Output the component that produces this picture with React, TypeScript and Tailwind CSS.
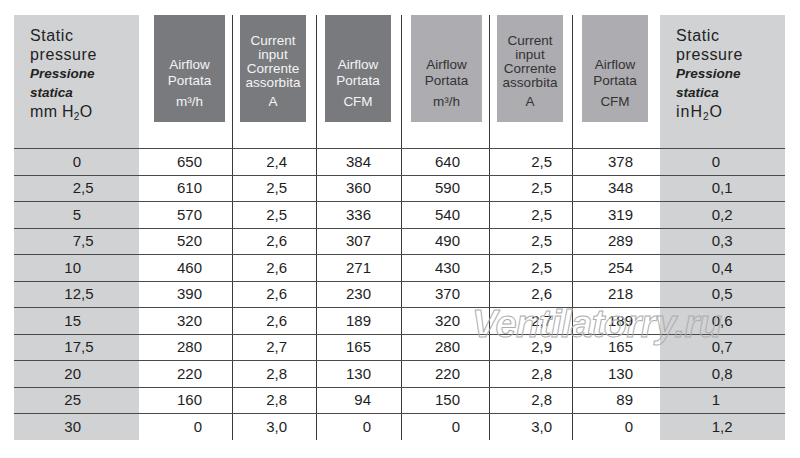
import type { ReactNode } from 'react';

type Col = {
  cell: string;
  box: string;
  pr: string;
  dark: boolean;
  lines: string[];
  unit: ReactNode;
};

const ROWS: string[][] = [
  ['0', '650', '2,4', '384', '640', '2,5', '378', '0'],
  ['2,5', '610', '2,5', '360', '590', '2,5', '348', '0,1'],
  ['5', '570', '2,5', '336', '540', '2,5', '319', '0,2'],
  ['7,5', '520', '2,6', '307', '490', '2,5', '289', '0,3'],
  ['10', '460', '2,6', '271', '430', '2,5', '254', '0,4'],
  ['12,5', '390', '2,6', '230', '370', '2,6', '218', '0,5'],
  ['15', '320', '2,6', '189', '320', '2,7', '189', '0,6'],
  ['17,5', '280', '2,7', '165', '280', '2,9', '165', '0,7'],
  ['20', '220', '2,8', '130', '220', '2,8', '130', '0,8'],
  ['25', '160', '2,8', '94', '150', '2,8', '89', '1'],
  ['30', '0', '3,0', '0', '0', '3,0', '0', '1,2'],
];

const airflow = ['Airflow', 'Portata'];
const current = ['Current', 'input', 'Corrente', 'assorbita'];

const COLS: Col[] = [
  { cell: '', box: 'ml-[15px] w-[71px]', pr: 'pr-[30px]', dark: true, lines: airflow, unit: 'm³/h' },
  { cell: 'border-l border-[#3a3a3a]', box: 'ml-[7px] w-[66px]', pr: 'pr-[29px]', dark: true, lines: current, unit: 'A' },
  { cell: 'border-l border-[#3a3a3a]', box: 'ml-[8px] w-[66px]', pr: 'pr-[30px]', dark: true, lines: airflow, unit: 'CFM' },
  { cell: 'border-l border-[#3a3a3a]', box: 'ml-[9px] w-[71px]', pr: 'pr-[29px]', dark: false, lines: airflow, unit: 'm³/h' },
  { cell: 'border-l border-[#3a3a3a]', box: 'ml-[7px] w-[66px]', pr: 'pr-[20px]', dark: false, lines: current, unit: 'A' },
  { cell: 'border-l border-[#3a3a3a]', box: 'ml-[9px] w-[66px]', pr: 'pr-[27px]', dark: false, lines: airflow, unit: 'CFM' },
];

const GRID = 'grid grid-cols-[125px_93px_84px_85px_88px_83px_88px_125px]';

const PressureHead = ({ unit }: { unit: ReactNode }) => (
  <div className="h-full bg-[#d1d2d4] pl-[16px] pt-[11px] text-[16px] leading-[19px] tracking-[0.6px] text-[#222]">
    <div>Static</div>
    <div>pressure</div>
    <div className="text-[13.5px] font-bold italic tracking-normal">Pressione</div>
    <div className="text-[13.5px] font-bold italic tracking-normal">statica</div>
    <div className="tracking-[0.3px]">{unit}</div>
  </div>
);

// integer part right-aligned on a fixed edge, decimals hang after it
const Split = ({ v, edge }: { v: string; edge: string }) => {
  const [int, dec] = v.split(',');
  return (
    <div className="flex h-full items-center bg-[#d1d2d4]">
      <span className={`${edge} inline-block text-right`}>{int}</span>
      {dec !== undefined && <span>,{dec}</span>}
    </div>
  );
};

const HeadBox = ({ col }: { col: Col }) => {
  const tight = col.lines.length > 2;
  return (
    <div className={`h-full ${col.cell}`}>
      <div
        className={`${col.box} flex h-[107px] flex-col items-center justify-end pb-[12px] text-center text-[13.5px] ${
          col.dark ? 'bg-[#797a7e] text-[#f4f4f4]' : 'bg-[#adacb0] text-[#333]'
        }`}
      >
        <div className={tight ? 'leading-[14px]' : 'mb-[1px] leading-[16.6px]'}>
          {col.lines.map((l) => (
            <div key={l}>{l}</div>
          ))}
        </div>
        <div className={`leading-[16px] ${tight ? 'mt-[4px]' : 'mt-[3px]'}`}>{col.unit}</div>
      </div>
    </div>
  );
};

export default function App() {
  return (
    <div className="relative h-[458px] w-[800px] overflow-hidden bg-white font-['Liberation_Sans',Arial,sans-serif]">
      <div className="pl-[14px] pt-[15px]">
        <div className="w-[771px]">
          <div className={`${GRID} h-[133px]`}>
            <PressureHead
              unit={
                <>
                  mm H<sub className="text-[10px]">2</sub>O
                </>
              }
            />
            {COLS.map((c, i) => (
              <HeadBox key={i} col={c} />
            ))}
            <PressureHead
              unit={
                <span className="tracking-[1px]">
                  inH<sub className="text-[10px]">2</sub>O
                </span>
              }
            />
          </div>

          {ROWS.map((r, ri) => (
            <div
              key={ri}
              className={`${GRID} h-[26.55px] border-t border-[#4a4a4a] text-[15px] text-[#1e1e1e]`}
            >
              <Split v={r[0]} edge="w-[67px]" />
              {COLS.map((c, ci) => (
                <div key={ci} className={`flex h-full items-center justify-end ${c.cell} ${c.pr}`}>
                  {r[ci + 1]}
                </div>
              ))}
              <Split v={r[7]} edge="w-[60px]" />
            </div>
          ))}
        </div>
      </div>

      <div className="pointer-events-none absolute left-[472px] top-[305px] text-[38px] font-bold italic leading-none tracking-[-0.5px] text-transparent [-webkit-text-stroke:1px_#adadad]">
        Ventilatorry.ru
      </div>
    </div>
  );
}
